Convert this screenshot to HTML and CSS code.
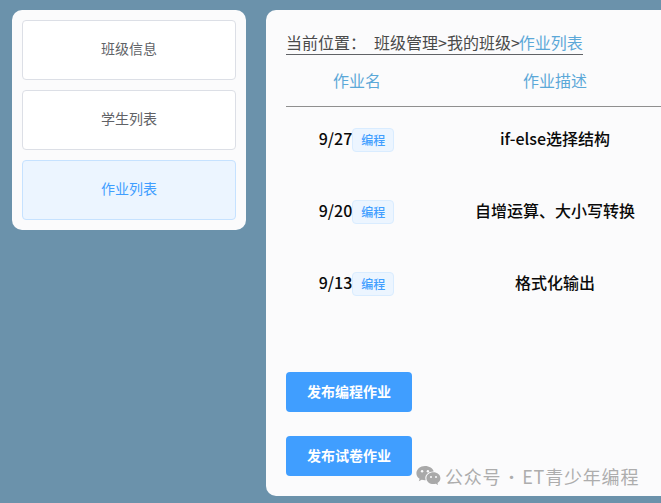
FILE: index.html
```html
<!DOCTYPE html>
<html lang="zh">
<head>
<meta charset="utf-8">
<title>作业列表</title>
<link rel="stylesheet" href="styles.css">
</head>
<body>
<div class="page">
  <nav class="sidebar">
    <a class="nav-item">班级信息</a>
    <a class="nav-item">学生列表</a>
    <a class="nav-item active">作业列表</a>
  </nav>
  <main class="main">
    <div class="crumb"><span class="crumb-label">当前位置<span class="colon">：</span></span><span>班级管理&gt;我的班级&gt;</span><span class="crumb-current">作业列表</span></div>
    <div class="table">
      <div class="row head"><div>作业名</div><div>作业描述</div></div>
      <div class="row body-row"><div class="name">9/27<span class="tag">编程</span></div><div>if-else选择结构</div></div>
      <div class="row body-row"><div class="name">9/20<span class="tag">编程</span></div><div>自增运算、大小写转换</div></div>
      <div class="row body-row"><div class="name">9/13<span class="tag">编程</span></div><div>格式化输出</div></div>
    </div>
    <div class="actions">
      <button class="btn">发布编程作业</button>
      <button class="btn">发布试卷作业</button>
    </div>
  </main>
</div>
<div class="watermark">
  <svg class="wx" width="25" height="20" viewBox="0 0 25 20" aria-hidden="true">
    <path fill="#a9a9a9" d="M9 0C4.2 0 .4 3.2.4 7.2c0 2.3 1.3 4.3 3.2 5.6l-.8 2.5 2.9-1.5c1 .3 2.1.5 3.3.5h.7c-.3-.8-.4-1.500-.4-2.200 0-3.700 3.500-6.600 7.800-6.600h.6C16.900 2.300 13.300 0 9 0z"/>
    <path fill="#a9a9a9" d="M24.400 12.200c0-3.300-3.200-5.900-7-5.900s-7 2.600-7 5.900 3.200 5.900 7 5.900c.8 0 1.600-.1 2.300-.3l2.400 1.300-.6-2.100c1.800-1.100 2.900-2.800 2.900-4.800z"/>
    <circle cx="6.100" cy="5.300" r="1.200" fill="#fbfbfc"/><circle cx="11.900" cy="5.300" r="1.200" fill="#fbfbfc"/>
    <circle cx="15" cy="11" r="1" fill="#fbfbfc"/><circle cx="20" cy="11" r="1" fill="#fbfbfc"/>
  </svg>
  <span>公众号<span class="dot">·</span>ET青少年编程</span>
</div>
</body>
</html>
```
FILE: styles.css
```css
* { box-sizing: border-box; }
html, body { margin: 0; height: 100%; overflow: hidden; }
body {
  background: #6b92ab;
  font-family: "Noto Sans CJK SC", sans-serif;
  position: relative;
}
.page {
  display: flex;
  align-items: flex-start;
  gap: 20px;
  padding: 10px 0 0 12px;
  width: 100%;
}
.sidebar {
  width: 234px;
  flex: none;
  display: flex;
  flex-direction: column;
  gap: 10px;
  padding: 10px;
  background: #fbfbfc;
  border-radius: 10px;
}
.nav-item {
  height: 60px;
  display: flex;
  align-items: center;
  justify-content: center;
  padding-bottom: 5px;
  background: #fff;
  border: 1px solid #dcdfe6;
  border-radius: 4px;
  font-size: 14px;
  color: #606266;
}
.nav-item.active {
  background: #ecf5ff;
  border-color: #c6e2ff;
  color: #409eff;
}
.main {
  flex: 1;
  min-width: 0;
  height: 486px;
  overflow: hidden;
  background: #fbfbfc;
  border-radius: 10px 0 0 10px;
  padding: 20px 0 0 20px;
}
.crumb {
  display: inline-flex;
  height: 24px;
  align-items: center;
  border-bottom: 1px solid #606266;
  font-size: 16px;
  color: #4a4a4a;
  white-space: nowrap;
}
.crumb-label { width: 88px; }
.colon { font-family: "Noto Sans CJK TC", sans-serif; }
.crumb-current { color: #5ba8d8; margin-left: -1px; }
.table { width: 396px; }
.row {
  display: grid;
  grid-template-columns: 142px 254px;
  text-align: center;
  align-items: center;
}
.head {
  height: 52px;
  border-bottom: 1px solid #8f8f8f;
  color: #5ba8d8;
  font-size: 16px;
  padding-bottom: 1px;
}
.body-row {
  height: 72px;
  padding-bottom: 10px;
  font-size: 16px;
  font-weight: 500;
  color: #0a0a0a;
}
.name { display: flex; justify-content: center; align-items: center; padding-right: 2px; }
.tag {
  width: 42px;
  height: 24px;
  margin-left: -1px;
  position: relative;
  top: 2px;
  left: 1px;
  display: flex;
  align-items: center;
  justify-content: center;
  background: #ecf5ff;
  border: 1px solid #d9ecff;
  border-radius: 4px;
  font-size: 12px;
  font-weight: 500;
  color: #409eff;
}
.actions {
  display: flex;
  flex-direction: column;
  align-items: flex-start;
  gap: 24px;
  margin-top: 49px;
}
.btn {
  width: 126px;
  height: 40px;
  border: 0;
  border-radius: 4px;
  padding-bottom: 2px;
  background: #409eff;
  color: #fff;
  font: 700 14px "Noto Sans CJK SC", sans-serif;
}
.watermark {
  position: absolute;
  left: 416px;
  top: 463px;
  display: flex;
  align-items: center;
  gap: 4px;
  color: #adadad;
  font-size: 18px;
  letter-spacing: .8px;
  white-space: nowrap;
}
.dot { margin: 0 1px; font-weight: 300; }
```
